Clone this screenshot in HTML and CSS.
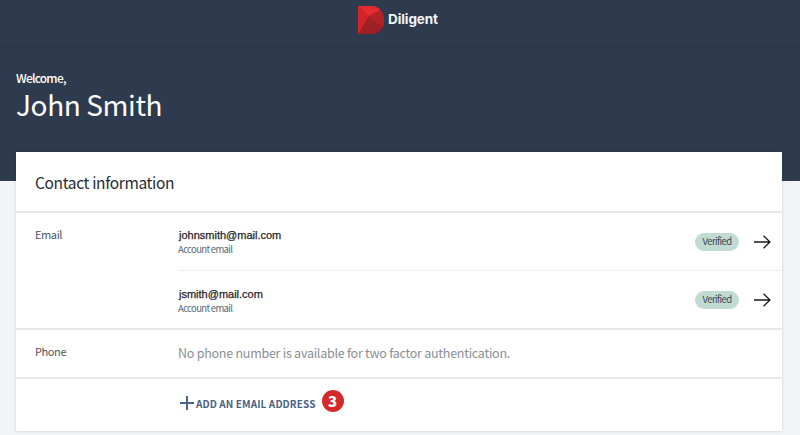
FILE: index.html
```html
<!DOCTYPE html>
<html lang="en">
<head>
<meta charset="utf-8">
<title>Diligent</title>
<link rel="stylesheet" href="styles.css">
</head>
<body>
<header class="topbar">
  <svg class="logo" width="27" height="30" viewBox="0 0 27 30">
    <path d="M0 1H13C21 1 26 7 26 15C26 23 21 29 13 29H0Z" fill="#c6252b"/>
    <path d="M0 1H13C17 1 20 2.500 22 5L11 11Z" fill="#e32b30"/>
    <path d="M0 1L11 11L0 29Z" fill="#d42229"/>
    <path d="M0 29L11 11L25 22C23 26 18 29 13 29Z" fill="#9c2024"/>
    <path d="M11 11L22 5C25 8 26 11 26 15C26 18 25.500 20 25 22Z" fill="#b32227"/>
  </svg>
  <span class="brand">Diligent</span>
</header>
<section class="hero">
  <p class="welcome">Welcome,</p>
  <h1 class="name">John Smith</h1>
</section>
<main class="card">
  <h2 class="card-title">Contact information</h2>
  <div class="row row-email">
    <div class="label">Email</div>
    <div class="entries">
      <div class="entry">
        <div class="entry-text">
          <div class="address">johnsmith@mail.com</div>
          <div class="note">Account email</div>
        </div>
        <span class="pill">Verified</span>
        <svg class="arrow" width="17" height="14" viewBox="0 0 17 14"><path d="M0 7H16M9.500 0.700L16 7L9.500 13.300" fill="none" stroke="#1a1a1a" stroke-width="1.300"/></svg>
      </div>
      <div class="entry entry-second">
        <div class="entry-text">
          <div class="address">jsmith@mail.com</div>
          <div class="note">Account email</div>
        </div>
        <span class="pill">Verified</span>
        <svg class="arrow" width="17" height="14" viewBox="0 0 17 14"><path d="M0 7H16M9.500 0.700L16 7L9.500 13.300" fill="none" stroke="#1a1a1a" stroke-width="1.300"/></svg>
      </div>
    </div>
  </div>
  <div class="row row-phone">
    <div class="label">Phone</div>
    <div class="empty">No phone number is available for two factor authentication.</div>
  </div>
  <div class="row row-add">
    <svg class="plus" width="14" height="14" viewBox="0 0 14 14"><path d="M7 0V14M0 7H14" stroke="#4a6285" stroke-width="2"/></svg>
    <span class="add-text">ADD AN EMAIL ADDRESS</span>
    <span class="badge">3</span>
  </div>
</main>
</body>
</html>
```
FILE: styles.css
```css
* { box-sizing: border-box; }
html, body { height: 100%; }
body {
  margin: 0;
  height: 435px;
  overflow: hidden;
  background: #f3f4f6;
  font-family: "Noto Sans CJK SC", "Noto Sans", sans-serif;
  color: #262b33;
}
.topbar {
  height: 47px;
  background: #2e3a4e;
  border-bottom: 1px solid #283343;
  display: flex;
  align-items: flex-start;
  justify-content: center;
  gap: 3px;
  padding-right: 4px;
}
.logo { display: block; margin-top: 5px; }
.brand {
  font-family: "Inter", sans-serif;
  font-weight: 700;
  font-size: 13.500px;
  line-height: 16px;
  letter-spacing: -0.1px;
  color: #f2f4f7;
  margin-top: 11px;
}
.hero {
  height: 134px;
  background: #2e3a4e;
  padding: 22px 16px 0;
  color: #fff;
}
.welcome { margin: 0; font-size: 12px; line-height: 17px; font-weight: 500; letter-spacing: -0.8px; }
.name { margin: 0; font-size: 28px; line-height: 36px; font-weight: 400; letter-spacing: -0.4px; }
.card {
  margin: -29px 18px 0 16px;
  height: 279px;
  background: #fff;
  box-shadow: 0 0 3px rgba(30, 40, 55, 0.18);
}
.card-title {
  margin: 0;
  height: 61px;
  padding: 19px 19px 0;
  font-size: 15.500px;
  line-height: 22px;
  font-weight: 400;
  letter-spacing: -0.35px;
  color: #262b33;
  border-bottom: 2px solid #e8e8e8;
}
.row { display: flex; padding-left: 19px; }
.label { width: 143px; font-size: 11px; line-height: 16px; color: #4b5563; letter-spacing: -0.4px; }
.row-email { height: 117px; border-bottom: 2px solid #e8e8e8; padding-top: 13px; }
.entries { flex: 1; margin-top: -13px; }
.entry {
  display: flex;
  align-items: center;
  height: 58px;
  padding-right: 11px;
  border-bottom: 1px solid #eeeeee;
}
.entry-second { border-bottom: 0; }
.entry-text { flex: 1; padding-left: 1px; }
.entry-second .entry-text { padding-top: 1px; }
.address {
  font-family: "Liberation Sans", Arial, sans-serif;
  font-size: 11px;
  line-height: 14px;
  font-weight: 400;
  color: #1f2328;
  -webkit-text-stroke: 0.25px #1f2328;
}
.note { font-size: 9.500px; line-height: 14px; color: #5b6675; letter-spacing: -0.65px; margin-left: -1px; }
.pill {
  width: 44px;
  height: 18px;
  border-radius: 9px;
  background: #c0dcd2;
  color: #3c4650;
  font-size: 9.500px;
  line-height: 17px;
  letter-spacing: -0.6px;
  text-align: center;
  margin-right: 15px;
}
.arrow { display: block; }
.row-phone { height: 49px; border-bottom: 2px solid #e8e8e8; padding-top: 13px; }
.empty { font-size: 12.500px; line-height: 22px; color: #8a8f96; letter-spacing: -0.25px; margin-top: -1px; }
.row-add { align-items: center; padding-left: 164px; height: 52px; padding-bottom: 6px; }
.plus { display: block; margin-right: 2px; margin-top: 1px; }
.add-text { font-size: 10px; font-weight: 700; letter-spacing: 0.1px; color: #4a6285; margin-top: 3px; }
.badge {
  width: 22px;
  height: 22px;
  border-radius: 50%;
  background: #d32a2a;
  color: #fff;
  font-weight: 900;
  font-size: 15px;
  line-height: 21px;
  text-align: center;
  margin-left: 6px;
  margin-top: -3px;
}
```
